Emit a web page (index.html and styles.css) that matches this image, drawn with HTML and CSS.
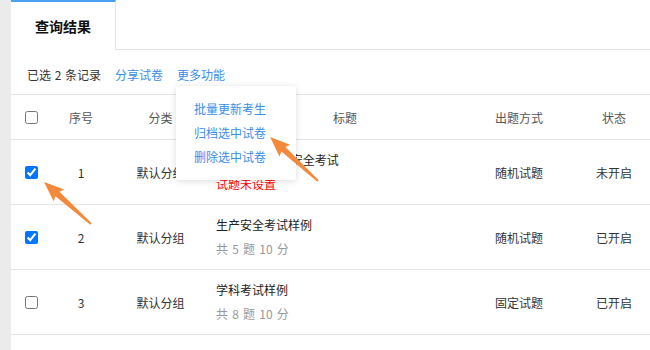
FILE: index.html
```html
<!DOCTYPE html>
<html lang="zh-CN">
<head>
<meta charset="utf-8">
<title>查询结果</title>
<link rel="stylesheet" href="styles.css">
</head>
<body>
<div class="panel">
  <div class="tabs">
    <div class="tab">查询结果</div>
    <div class="tab-rest"></div>
  </div>
  <div class="toolbar">
    <span class="info">已选 2 条记录</span>
    <a class="link">分享试卷</a>
    <span class="more-wrap">
      <a class="link">更多功能</a>
      <div class="dropdown">
        <div class="dd-item">批量更新考生</div>
        <div class="dd-item">归档选中试卷</div>
        <div class="dd-item">删除选中试卷</div>
      </div>
    </span>
  </div>
  <div class="table">
    <div class="row head">
      <div class="cell"><input type="checkbox"></div>
      <div class="cell">序号</div>
      <div class="cell">分类</div>
      <div class="cell">标题</div>
      <div class="cell">出题方式</div>
      <div class="cell">状态</div>
    </div>
    <div class="row">
      <div class="cell"><input type="checkbox" checked></div>
      <div class="cell">1</div>
      <div class="cell">默认分组</div>
      <div class="cell title"><div class="t-main">2023年度企业安全考试</div><div class="t-warn">试题未设置</div></div>
      <div class="cell">随机试题</div>
      <div class="cell">未开启</div>
    </div>
    <div class="row">
      <div class="cell"><input type="checkbox" checked></div>
      <div class="cell">2</div>
      <div class="cell">默认分组</div>
      <div class="cell title"><div class="t-main">生产安全考试样例</div><div class="t-sub">共 5 题 10 分</div></div>
      <div class="cell">随机试题</div>
      <div class="cell">已开启</div>
    </div>
    <div class="row">
      <div class="cell"><input type="checkbox"></div>
      <div class="cell">3</div>
      <div class="cell">默认分组</div>
      <div class="cell title"><div class="t-main">学科考试样例</div><div class="t-sub">共 8 题 10 分</div></div>
      <div class="cell">固定试题</div>
      <div class="cell">已开启</div>
    </div>
  </div>
</div>
<svg class="arrows" width="650" height="350" viewBox="0 0 650 350">
  <polygon class="arrow" transform="translate(91,224) rotate(221.8)" points="0,-1 45,-3 43,-8 63,0 43,8 45,3 0,1"/>
  <polygon class="arrow" transform="translate(318,181) rotate(222.5)" points="0,-1 47,-3 45,-8 65,0 45,8 47,3 0,1"/>
</svg>
</body>
</html>
```
FILE: styles.css
```css
html, body {
  margin: 0;
  padding: 0;
}
body {
  background: #ebebeb;
  font-family: "Noto Sans CJK SC", "Noto Sans", sans-serif;
  font-size: 12px;
  color: #333;
  width: 650px;
  height: 350px;
  overflow: hidden;
  position: relative;
}
.panel {
  margin-left: 11px;
  background: #fff;
  height: 350px;
}
.tabs {
  display: flex;
  height: 50px;
}
.tab {
  width: 105px;
  box-sizing: border-box;
  height: 50px;
  border-top: 2px solid #4a9ff5;
  border-right: 1px solid #e4e4e4;
  display: flex;
  align-items: center;
  justify-content: center;
  font-size: 14px;
  font-weight: bold;
  color: #111;
  padding-bottom: 1px;
}
.tab-rest {
  flex: 1;
  box-sizing: border-box;
  height: 50px;
  border-bottom: 1px solid #e4e4e4;
}
.toolbar {
  height: 44px;
  box-sizing: border-box;
  padding: 5px 0 0 16px;
  display: flex;
  align-items: center;
  gap: 14px;
  line-height: 20px;
}
.info {
  word-spacing: 1px;
}
.link {
  color: #3a8ee6;
  cursor: pointer;
}
.more-wrap {
  position: relative;
}
.dropdown {
  position: absolute;
  left: -1px;
  top: 21px;
  width: 120px;
  box-sizing: border-box;
  padding: 11px 0 11px 18px;
  background: #fff;
  border-radius: 3px;
  box-shadow: 0 1px 6px rgba(0, 0, 0, 0.15);
  z-index: 5;
}
.dd-item {
  line-height: 24px;
  color: #3a8ee6;
  white-space: nowrap;
}
.table {
  border-top: 1px solid #e4e4e4;
}
.row {
  display: grid;
  grid-template-columns: 40px 60px 99px 270px 78px 112px;
  height: 65px;
  box-sizing: border-box;
  border-bottom: 1px solid #e4e4e4;
}
.row.head {
  height: 45px;
  color: #555;
}
.cell {
  display: flex;
  align-items: center;
  justify-content: center;
  white-space: nowrap;
}
.cell input {
  margin: 0;
  width: 13px;
  height: 13px;
}
.cell.title {
  flex-direction: column;
  align-items: flex-start;
  padding-left: 6px;
  line-height: 24px;
}
.t-main {
  color: #222;
}
.t-warn {
  color: #f00;
}
.t-sub {
  color: #999;
  word-spacing: 1.5px;
}
.arrows {
  position: absolute;
  left: 0;
  top: 0;
  pointer-events: none;
  z-index: 10;
}
.arrow {
  fill: #f5893b;
}
```
